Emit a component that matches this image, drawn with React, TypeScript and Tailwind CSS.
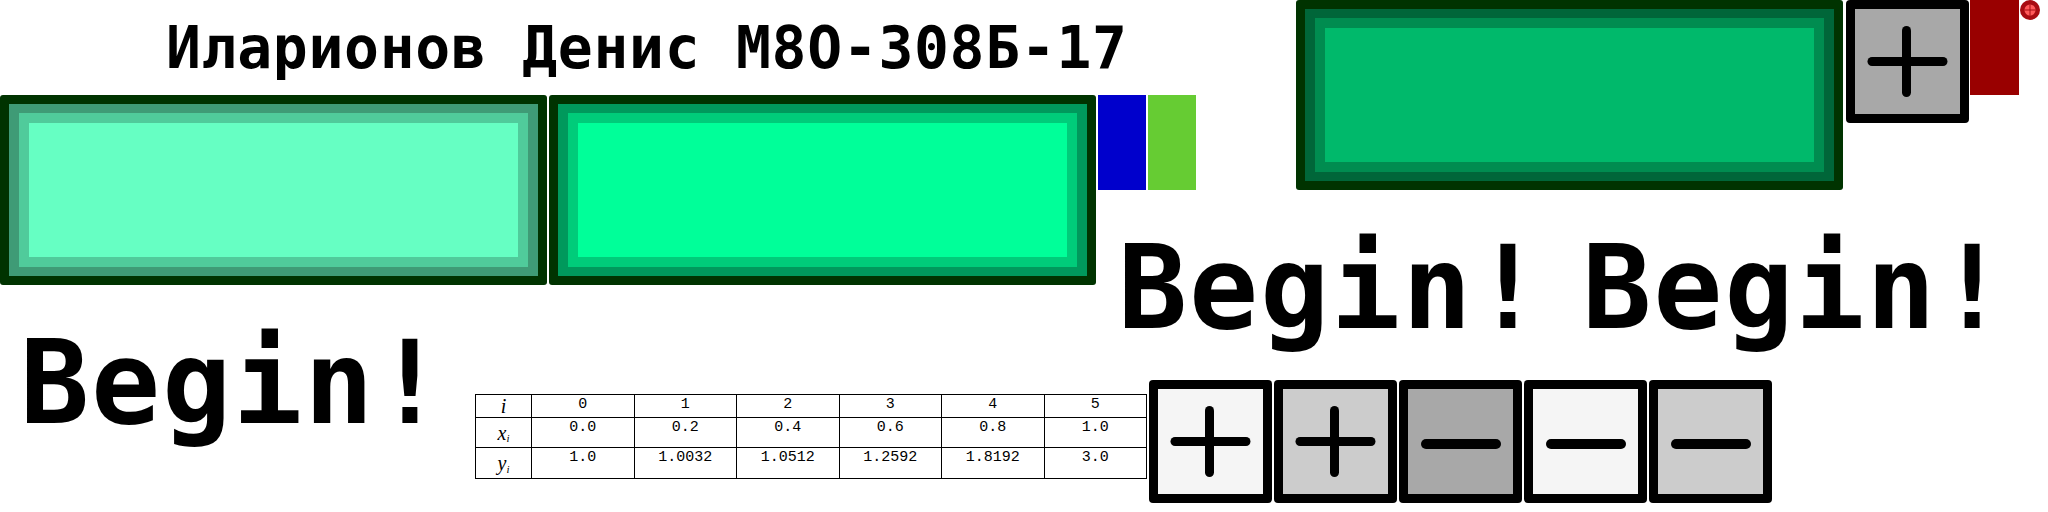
// App.tsx
const mono = "font-['DejaVu_Sans_Mono',monospace] font-bold text-black whitespace-pre leading-none";

const GreenButton = ({ band1, band2, face }: { band1: string; band2: string; face: string }) => (
  <div className="h-[190px] w-[547px] shrink-0 rounded-[3px] bg-[#003300] p-[9px]">
    <div className={`h-full px-[10px] py-[9px] ${band1}`}>
      <div className={`h-full p-[10px] ${band2}`}>
        <div className={`h-full ${face}`} />
      </div>
    </div>
  </div>
);

const SignButton = ({ face, sign }: { face: string; sign: 'plus' | 'minus' }) => (
  <div className="relative h-[123px] w-[123px] shrink-0 rounded-[4px] bg-black p-[9px]">
    <div className={`h-full w-full ${face}`} />
    <svg className="absolute left-0 top-0" width="123" height="123" viewBox="0 0 123 123">
      {sign === 'plus' ? (
        <g stroke="#000" strokeWidth="9" strokeLinecap="round">
          <path d="M26 61.5H97" />
          <path d="M60.5 30.5V92.5" />
        </g>
      ) : (
        <path d="M27 64H97" stroke="#000" strokeWidth="10" strokeLinecap="round" />
      )}
    </svg>
  </div>
);

const rows = [
  { label: 'i', sub: false, values: ['0', '1', '2', '3', '4', '5'] },
  { label: 'x', sub: true, values: ['0.0', '0.2', '0.4', '0.6', '0.8', '1.0'] },
  { label: 'y', sub: true, values: ['1.0', '1.0032', '1.0512', '1.2592', '1.8192', '3.0'] },
];

const DataTable = () => (
  <table className="mt-[109px] w-[672px] shrink-0 table-fixed border-collapse self-start bg-white text-black">
    <colgroup>
      <col className="w-[56px]" />
    </colgroup>
    <tbody>
      {rows.map((row, i) => (
        <tr key={row.label} className={i === 0 ? 'h-[23px]' : i === 1 ? 'h-[30px]' : 'h-[31px]'}>
          <td className="border border-black p-0 text-center align-middle font-['Liberation_Serif',serif] text-[20px] italic leading-none">
            {row.label}
            {row.sub && <sub className="text-[11px] leading-none">i</sub>}
          </td>
          {row.values.map((v) => (
            <td
              key={v}
              className="border border-black p-0 text-center align-top font-['Liberation_Mono',monospace] text-[15px] leading-[20px]"
            >
              {v}
            </td>
          ))}
        </tr>
      ))}
    </tbody>
  </table>
);

export default function App() {
  return (
    <div className="flex h-[512px] w-[2048px] overflow-hidden bg-white">
      {/* left half: title, two buttons, big label and the table */}
      <div className="flex w-[1098px] shrink-0 flex-col">
        <div className={`h-[95px] pl-[166px] pt-[19px] text-[58px] tracking-[0.7px] ${mono}`}>Иларионов Денис М8О-308Б-17</div>
        <div className="flex gap-[2px]">
          <GreenButton band1="bg-[#3f9b76]" band2="bg-[#50cb9b]" face="bg-[#66ffc3]" />
          <GreenButton band1="bg-[#00995c]" band2="bg-[#00cc7a]" face="bg-[#00ff99]" />
        </div>
        <div className="flex">
          <div className={`w-[475px] shrink-0 pl-[20px] pt-[41px] text-[115px] tracking-[1.8px] ${mono}`}>Begin!</div>
          <DataTable />
        </div>
      </div>

      {/* right half */}
      <div className="flex min-w-0 flex-1 flex-col">
        <div className="flex h-[190px] items-start">
          <div className="flex gap-[2px] pt-[95px]">
            <div className="h-[95px] w-[48px] bg-[#0000cc]" />
            <div className="h-[95px] w-[48px] bg-[#66cc33]" />
          </div>
          <div className="ml-[100px]">
            <GreenButton band1="bg-[#006639]" band2="bg-[#008c50]" face="bg-[#00b96b]" />
          </div>
          <div className="ml-[3px]">
            <SignButton face="bg-[#a8a8a8]" sign="plus" />
          </div>
          <div className="ml-[1px] h-[95px] w-[49px] bg-[#990000]" />
          <svg className="ml-[1px]" width="20" height="20" viewBox="0 0 20 20">
            <circle cx="10" cy="10" r="10" fill="#a80c12" />
            <circle cx="10" cy="10" r="5.5" fill="#ff5a5a" />
            <path d="M10 4.5V15.5M4.5 10H15.5" stroke="#a80c12" strokeWidth="1" />
          </svg>
        </div>
        <div className={`flex h-[190px] gap-[38px] pl-[20px] pt-[41px] text-[115px] tracking-[1.8px] ${mono}`}>
          <span>Begin!</span>
          <span>Begin!</span>
        </div>
        <div className="flex gap-[2px] pl-[51px]">
          <SignButton face="bg-[#f5f5f5]" sign="plus" />
          <SignButton face="bg-[#cccccc]" sign="plus" />
          <SignButton face="bg-[#a8a8a8]" sign="minus" />
          <SignButton face="bg-[#f5f5f5]" sign="minus" />
          <SignButton face="bg-[#cccccc]" sign="minus" />
        </div>
      </div>
    </div>
  );
}
